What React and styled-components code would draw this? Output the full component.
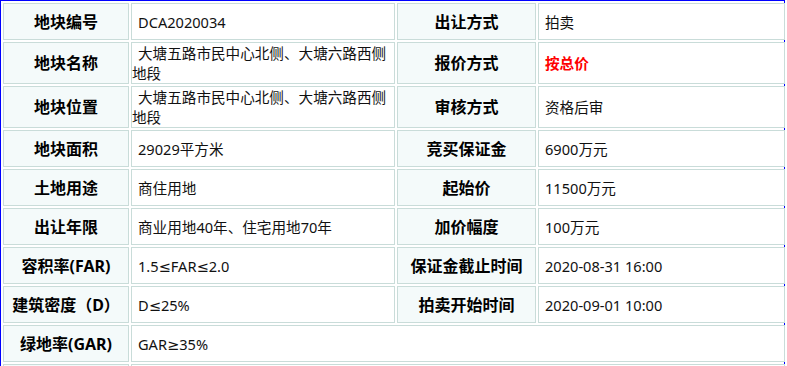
import React from "react";
import styled, { createGlobalStyle } from "styled-components";

const GlobalStyle = createGlobalStyle`
  html, body {
    margin: 0;
    padding: 0;
    background: #fff;
  }
  body {
    font-family: "Noto Sans", "DejaVu Sans", "Noto Sans CJK SC", sans-serif;
  }
`;

const rows = [
  [
    { label: "地块编号", value: "DCA2020034" },
    { label: "出让方式", value: "拍卖" },
  ],
  [
    { label: "地块名称", value: "大塘五路市民中心北侧、大塘六路西侧地段" },
    { label: "报价方式", value: "按总价", red: true },
  ],
  [
    { label: "地块位置", value: "大塘五路市民中心北侧、大塘六路西侧地段" },
    { label: "审核方式", value: "资格后审" },
  ],
  [
    { label: "地块面积", value: "29029平方米" },
    { label: "竞买保证金", value: "6900万元" },
  ],
  [
    { label: "土地用途", value: "商住用地" },
    { label: "起始价", value: "11500万元" },
  ],
  [
    { label: "出让年限", value: "商业用地40年、住宅用地70年" },
    { label: "加价幅度", value: "100万元" },
  ],
  [
    { label: "容积率(FAR)", value: "1.5≤FAR≤2.0" },
    { label: "保证金截止时间", value: "2020-08-31 16:00" },
  ],
  [
    { label: "建筑密度（D）", value: "D≤25%" },
    { label: "拍卖开始时间", value: "2020-09-01 10:00" },
  ],
  [{ label: "绿地率(GAR)", value: "GAR≥35%", span: 3 }],
  [{ label: "", value: "", span: 3 }],
];

const columns = [126, 264, 139, 247];

const Frame = styled.div`
  width: 785px;
  box-sizing: border-box;
  border: 1px solid #0000ff;
`;

const Table = styled.table`
  width: 783px;
  table-layout: fixed;
  border-collapse: separate;
  border-spacing: 2px;
`;

const Col = styled.col`
  width: ${(p) => p.$w}px;
`;

const Label = styled.td`
  height: 35px;
  padding: 0;
  border: 1px solid #c9dcd9;
  background: #f4fafa;
  text-align: center;
  vertical-align: middle;
  font-size: 16px;
  font-weight: bold;
  line-height: 20px;
  color: #000;
`;

const Value = styled.td`
  height: 35px;
  padding: 0;
  border: 1px solid #c9dcd9;
  background: #fff;
  vertical-align: middle;
  text-indent: 6px;
  font-size: 14.6px;
  line-height: 20px;
  color: ${(p) => (p.$red ? "#ff0000" : "#111")};
  font-weight: ${(p) => (p.$red ? "bold" : "normal")};
`;

export default function App() {
  return (
    <>
      <GlobalStyle />
      <Frame>
        <Table>
          <colgroup>
            {columns.map((w, i) => (
              <Col key={i} $w={w} />
            ))}
          </colgroup>
          <tbody>
            {rows.map((row, i) => (
              <tr key={i}>
                {row.map((c, j) => (
                  <React.Fragment key={j}>
                    <Label>{c.label}</Label>
                    <Value colSpan={c.span || 1} $red={c.red}>
                      {c.value}
                    </Value>
                  </React.Fragment>
                ))}
              </tr>
            ))}
          </tbody>
        </Table>
      </Frame>
    </>
  );
}
